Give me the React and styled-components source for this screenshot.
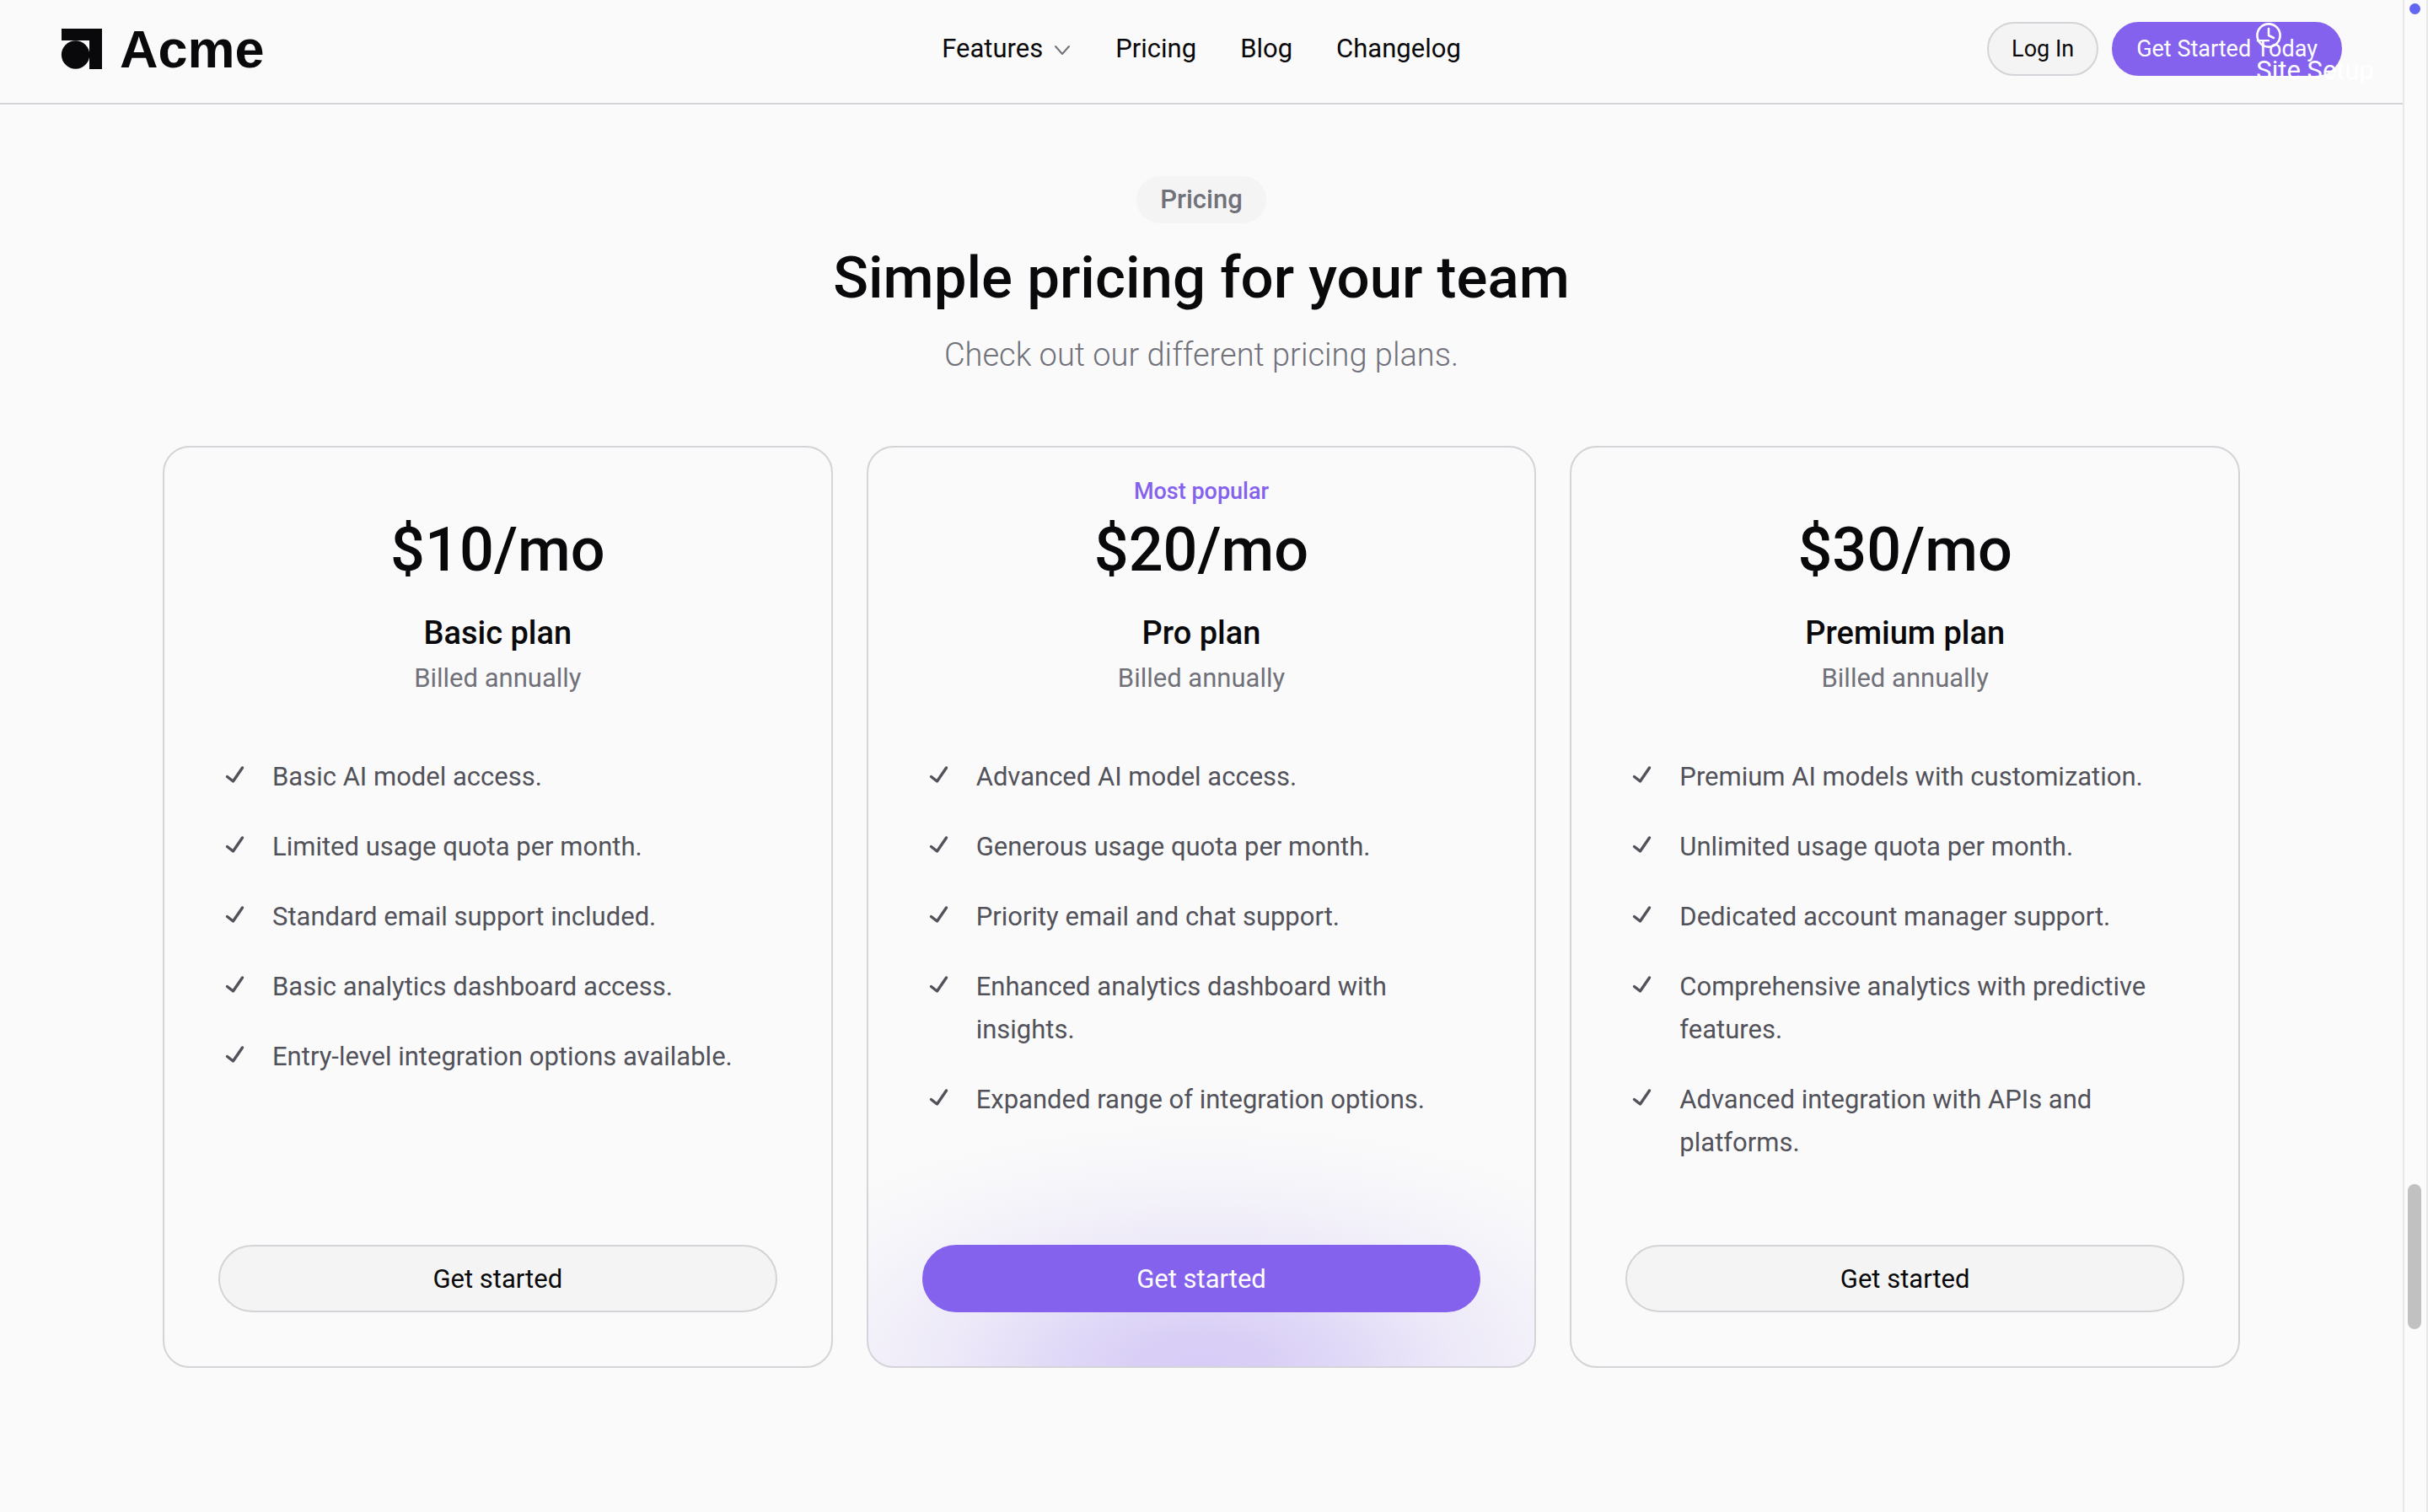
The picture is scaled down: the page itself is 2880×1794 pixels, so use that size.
import React from "react";
import styled, { createGlobalStyle, css } from "styled-components";

const color = {
  page: "#fafafa",
  ink: "#09090b",
  body: "#52525b",
  muted: "#71717a",
  soft: "#f4f4f4",
  line: "#d4d4d8",
  rail: "#e8e8e8",
  accent: "#8562ed",
  white: "#ffffff",
};

const GlobalStyle = createGlobalStyle`
  *, *::before, *::after { box-sizing: border-box; }
  html { scrollbar-width: none; }
  body {
    margin: 0;
    background: ${color.page};
    color: ${color.ink};
    font-family: Roboto, Inter, "Liberation Sans", sans-serif;
    font-size: 31px;
  }
  h1, h2, p, ul { margin: 0; padding: 0; }
  ul { list-style: none; }
  a { color: inherit; text-decoration: none; }
`;

const Shell = styled.div`
  display: grid;
  grid-template-columns: minmax(0, 1fr) 30px;
  min-height: 100vh;
`;

const Page = styled.div`
  position: relative;
`;

const Header = styled.header`
  display: grid;
  grid-template-columns: 1fr auto 1fr;
  align-items: center;
  padding: 26px 72px 32px;
  border-bottom: 2px solid ${color.line};
`;

const Brand = styled.a`
  display: flex;
  align-items: center;
  gap: 20px;
  justify-self: start;
  font-family: "Liberation Sans", Arial, sans-serif;
  font-size: 63px;
  font-weight: 700;
  line-height: 64px;
`;

const Nav = styled.nav`
  display: flex;
  align-items: center;
  gap: 52px;
`;

const navItem = css`
  display: flex;
  align-items: center;
  gap: 12px;
  padding: 0;
  border: 0;
  background: none;
  color: ${color.ink};
  font: inherit;
  line-height: 40px;
`;

const NavLink = styled.a`
  ${navItem}
`;

const NavMenu = styled.button`
  ${navItem}
`;

const Actions = styled.div`
  display: flex;
  gap: 16px;
  justify-self: end;
`;

const Button = styled.button`
  height: ${(p) => (p.$large ? "80px" : "64px")};
  width: ${(p) => (p.$large ? "100%" : "auto")};
  padding: 0 27px;
  border: 2px solid ${(p) => (p.$primary ? color.accent : color.line)};
  border-radius: 40px;
  background: ${(p) => (p.$primary ? color.accent : color.soft)};
  color: ${(p) => (p.$primary ? color.white : color.ink)};
  font-family: inherit;
  font-size: ${(p) => (p.$large ? "31px" : "27px")};
  white-space: nowrap;
`;

const SiteSetup = styled.a`
  position: absolute;
  top: 27px;
  right: 34px;
  display: flex;
  flex-direction: column;
  gap: 7px;
  color: ${color.white};
  line-height: 40px;
`;

const Pricing = styled.main`
  display: flex;
  flex-direction: column;
  align-items: center;
  padding: 85px 72px 96px;
`;

const Pill = styled.span`
  padding: 0 28px;
  border-radius: 28px;
  background: ${color.soft};
  color: ${color.muted};
  font-weight: 500;
  line-height: 56px;
`;

const Title = styled.h1`
  margin-top: 22px;
  font-size: 69px;
  font-weight: 500;
  line-height: 86px;
`;

const Subtitle = styled.p`
  margin-top: 18px;
  color: ${color.muted};
  font-size: 38px;
  font-weight: 300;
  line-height: 60px;
`;

const Plans = styled.section`
  display: grid;
  grid-template-columns: repeat(3, minmax(0, 1fr));
  gap: 40px;
  width: 100%;
  max-width: 2464px;
  margin-top: 78px;
`;

const Card = styled.article`
  display: flex;
  flex-direction: column;
  padding: 36px 64px 64px;
  border: 2px solid ${color.line};
  border-radius: 32px;
  text-align: center;
  ${(p) =>
    p.$glow &&
    css`
      background: radial-gradient(
          ellipse 600px 290px at 50% 100%,
          rgba(133, 98, 237, 0.3) 0%,
          rgba(133, 98, 237, 0.28) 14%,
          rgba(133, 98, 237, 0.22) 28%,
          rgba(133, 98, 237, 0.11) 50%,
          rgba(133, 98, 237, 0.04) 75%,
          rgba(133, 98, 237, 0) 100%
        )
        no-repeat bottom / 100% 290px;
    `}
`;

const Ribbon = styled.p`
  min-height: 32px;
  color: ${color.accent};
  font-size: 27px;
  font-weight: 500;
  line-height: 32px;
`;

const Price = styled.p`
  margin-top: 18px;
  font-size: 72px;
  font-weight: 500;
  line-height: 72px;
`;

const PlanName = styled.h2`
  margin-top: 38px;
  font-size: 38px;
  font-weight: 500;
  line-height: 48px;
`;

const Billing = styled.p`
  margin-top: 10px;
  color: ${color.muted};
  line-height: 40px;
`;

const Features = styled.ul`
  flex: 1;
  display: flex;
  flex-direction: column;
  gap: 32px;
  margin-top: 71px;
  margin-bottom: 96px;
  padding: 0 24px 0 4px;
  color: ${color.body};
  line-height: 51px;
  text-align: left;
`;

const Feature = styled.li`
  display: grid;
  grid-template-columns: 30px 1fr;
  gap: 30px;
`;

const CheckBox = styled.span`
  display: flex;
  align-items: center;
  height: 51px;
`;

const Rail = styled.aside`
  position: sticky;
  top: 0;
  display: flex;
  flex-direction: column;
  align-items: center;
  height: 100vh;
  padding: 4px 2px 0 0;
  border: solid ${color.rail};
  border-width: 0 2px;
  background: #fbfbfb;
`;

const RailDot = styled.span`
  width: 13px;
  height: 13px;
  border-radius: 50%;
  background: #6366f1;
`;

const RailSpace = styled.span`
  flex: ${(p) => p.$grow} 0 0;
`;

const RailThumb = styled.span`
  width: 16px;
  height: 172px;
  border-radius: 8px;
  background: #c1c1c1;
`;

const LogoMark = () => (
  <svg width="50" height="48" viewBox="-1 0 50 48" fill={color.ink} aria-hidden="true">
    <path d="M0 0H48V48H33V14H0Z" />
    <circle cx="16.6" cy="31" r="16.7" />
  </svg>
);

const Chevron = () => (
  <svg width="22" height="20" viewBox="0 0 22 20" fill="none" stroke={color.muted} strokeWidth="2" strokeLinecap="round" strokeLinejoin="round" aria-hidden="true">
    <path d="M3 7l8 9 8-9" />
  </svg>
);

const Check = () => (
  <svg width="30" height="30" viewBox="0 0 30 30" fill="none" stroke={color.body} strokeWidth="3.4" strokeLinecap="round" strokeLinejoin="round" aria-hidden="true">
    <path d="M6.5 14.5L13.5 20 24.5 4" />
  </svg>
);

const Clock = () => (
  <svg width="30" height="30" viewBox="0 0 30 30" fill="none" stroke="currentColor" strokeWidth="2.6" strokeLinecap="round" strokeLinejoin="round" aria-hidden="true">
    <circle cx="15" cy="15" r="13.6" />
    <path d="M15 7v8l6 3" />
  </svg>
);

const plans = [
  {
    name: "Basic plan",
    price: "$10/mo",
    features: [
      "Basic AI model access.",
      "Limited usage quota per month.",
      "Standard email support included.",
      "Basic analytics dashboard access.",
      "Entry-level integration options available.",
    ],
  },
  {
    name: "Pro plan",
    price: "$20/mo",
    popular: true,
    features: [
      "Advanced AI model access.",
      "Generous usage quota per month.",
      "Priority email and chat support.",
      "Enhanced analytics dashboard with insights.",
      "Expanded range of integration options.",
    ],
  },
  {
    name: "Premium plan",
    price: "$30/mo",
    features: [
      "Premium AI models with customization.",
      "Unlimited usage quota per month.",
      "Dedicated account manager support.",
      "Comprehensive analytics with predictive features.",
      "Advanced integration with APIs and platforms.",
    ],
  },
];

const PlanCard = ({ plan }) => (
  <Card $glow={plan.popular}>
    <Ribbon>{plan.popular && "Most popular"}</Ribbon>
    <Price>{plan.price}</Price>
    <PlanName>{plan.name}</PlanName>
    <Billing>Billed annually</Billing>
    <Features>
      {plan.features.map((text) => (
        <Feature key={text}>
          <CheckBox>
            <Check />
          </CheckBox>
          <span>{text}</span>
        </Feature>
      ))}
    </Features>
    <Button type="button" $large $primary={plan.popular}>
      Get started
    </Button>
  </Card>
);

export default function App() {
  return (
    <>
      <GlobalStyle />
      <Shell>
        <Page>
          <Header>
            <Brand href="#">
              <LogoMark />
              Acme
            </Brand>
            <Nav>
              <NavMenu type="button">
                Features
                <Chevron />
              </NavMenu>
              <NavLink href="#">Pricing</NavLink>
              <NavLink href="#">Blog</NavLink>
              <NavLink href="#">Changelog</NavLink>
            </Nav>
            <Actions>
              <Button type="button">Log In</Button>
              <Button type="button" $primary>
                Get Started Today
              </Button>
            </Actions>
          </Header>
          <SiteSetup href="#">
            <Clock />
            Site Setup
          </SiteSetup>
          <Pricing>
            <Pill>Pricing</Pill>
            <Title>Simple pricing for your team</Title>
            <Subtitle>Check out our different pricing plans.</Subtitle>
            <Plans>
              {plans.map((plan) => (
                <PlanCard key={plan.name} plan={plan} />
              ))}
            </Plans>
          </Pricing>
        </Page>
        <Rail>
          <RailDot />
          <RailSpace $grow={32} />
          <RailThumb />
          <RailSpace $grow={5} />
        </Rail>
      </Shell>
    </>
  );
}
